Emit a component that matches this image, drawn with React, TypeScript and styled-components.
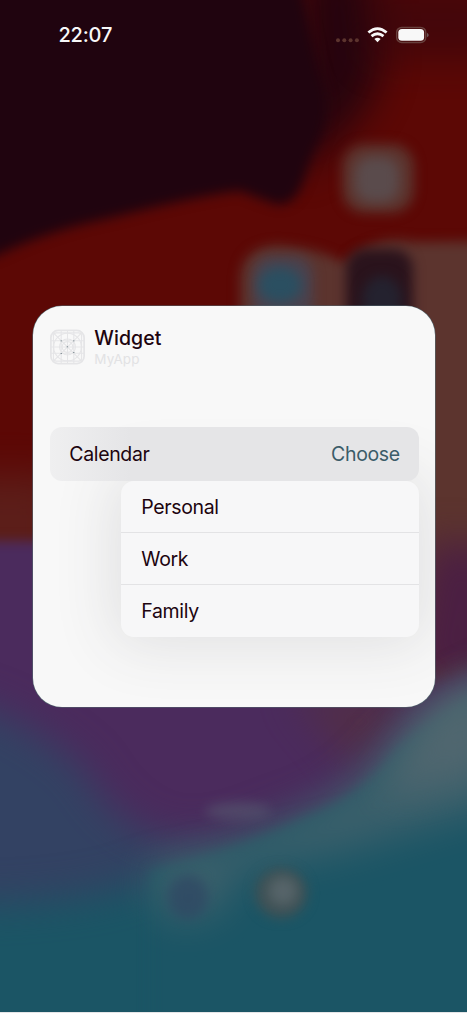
import React from "react";
import styled, { createGlobalStyle } from "styled-components";

const GlobalStyle = createGlobalStyle`
  *, *::before, *::after { box-sizing: border-box; }
  body { margin: 0; background: #1b5565; }
`;

const Screen = styled.main`
  position: relative;
  isolation: isolate;
  width: 467px;
  height: 1013px;
  overflow: hidden;
  display: flex;
  flex-direction: column;
  border-bottom: 1px solid #e5e5e7;
  color: #20040f;
  font-family: Inter, "Liberation Sans", sans-serif;
`;

const WallpaperArt = styled.svg`
  position: absolute;
  inset: 0;
  z-index: -1;
  width: 467px;
  height: 1013px;
`;

const StatusBar = styled.header`
  display: flex;
  align-items: center;
  justify-content: space-between;
  height: 70px;
  padding: 0 37px 0 58.5px;
  color: #f8f8f8;
`;

const Clock = styled.time`
  font-size: 20px;
  font-weight: 500;
  line-height: 24px;
  letter-spacing: -0.2px;
`;

const StatusIcons = styled.svg`
  display: block;
  width: 95px;
  height: 20px;
`;

const Card = styled.section`
  flex: none;
  width: 402px;
  height: 401px;
  margin: 236px 0 0 33.3px;
  padding: 23px 16.5px 0 17px;
  border-radius: 29px;
  background: #f8f8f8;
  box-shadow: 0 0 0 0.6px #546870;
  overflow: hidden;
`;

const CardHeader = styled.div`
  display: flex;
  align-items: flex-start;
  gap: 9px;
  height: 98px;
`;

const AppIcon = styled.svg`
  display: block;
  flex: none;
  width: 35px;
  height: 36px;
`;

const Heading = styled.div`
  display: flex;
  flex-direction: column;
`;

const Title = styled.h1`
  margin: -3px 0 0;
  font-size: 19.5px;
  font-weight: 500;
  line-height: 25px;
  letter-spacing: 0.1px;
`;

const AppName = styled.span`
  color: #e2e2e4;
  font-size: 13.5px;
  line-height: 17px;
  letter-spacing: 0.1px;
`;

const SettingRow = styled.div`
  position: relative;
  z-index: 1;
  display: flex;
  align-items: center;
  justify-content: space-between;
  height: 53.5px;
  padding: 0 19px;
  border-radius: 12px;
  background: linear-gradient(90deg, #efeff0, #e5e5e7 22%);
`;

const Label = styled.span<{ $muted?: boolean }>`
  color: ${({ $muted }) => ($muted ? "#3b5c69" : "inherit")};
  font-size: 19.5px;
  font-weight: 400;
  line-height: 24px;
  letter-spacing: -0.35px;
`;

const Menu = styled.ul`
  position: relative;
  margin: 0 0 0 71px;
  padding: 0;
  list-style: none;
  border-radius: 13px;
  background: #f7f7f8;
  box-shadow: 0 0 60px 8px rgba(60, 60, 75, 0.125);
`;

const MenuItem = styled.li`
  display: flex;
  align-items: center;
  height: 52px;
  padding: 1px 0 0 20px;
  border-bottom: 1px solid #e3e3e5;

  &:last-child {
    border-bottom-color: transparent;
  }
`;

function Wallpaper() {
  return (
    <WallpaperArt viewBox="0 0 467 1013" aria-hidden="true">
      <defs>
        <filter id="soft" x="-50%" y="-50%" width="200%" height="200%" colorInterpolationFilters="sRGB">
          <feGaussianBlur stdDeviation="6" />
        </filter>
        <filter id="wide" x="-50%" y="-50%" width="200%" height="200%" colorInterpolationFilters="sRGB">
          <feGaussianBlur stdDeviation="19" />
        </filter>
      </defs>
      <rect width="467" height="1013" fill="#5c0805" />
      <path d="M300 -40H365Q400 65 360 115Q325 150 300 180Z" fill="#20040f" opacity=".9" filter="url(#wide)" />
      <path
        d="M-40 -40H295L320 72Q335 110 318 144Q312 155 304 180Q294 208 275 204L240 191Q205 194 110 218Q50 230 0 254L-40 270Z"
        fill="#20040f"
        filter="url(#soft)"
      />
      <path d="M360 -20H500V60H370Z" fill="#31050e" opacity=".55" filter="url(#wide)" />
      <path
        d="M240 278Q242 247 277 245Q315 247 345 263Q375 233 415 242L500 241V700H400V410H240Z"
        fill="#5c342e"
        filter="url(#soft)"
      />
      <rect x="-40" y="475" width="100" height="110" fill="#5c342e" opacity=".5" filter="url(#wide)" />
      <rect x="342" y="144" width="72" height="69" rx="23" fill="#5c342e" filter="url(#soft)" />
      <rect x="355" y="157" width="44" height="45" rx="16" fill="#5a4b4c" filter="url(#soft)" />
      <rect x="253" y="256" width="60" height="65" rx="19" fill="#4a424e" filter="url(#soft)" />
      <ellipse cx="280" cy="285" rx="22" ry="18" fill="#2b4f61" filter="url(#soft)" />
      <rect x="346" y="249" width="67" height="82" rx="20" fill="#2a131c" filter="url(#soft)" />
      <ellipse cx="382" cy="300" rx="20" ry="24" fill="#24222f" filter="url(#soft)" />
      <path d="M-40 541H60L220 620L405 690L500 660V1050H-40Z" fill="#4b2b5d" filter="url(#soft)" />
      <path d="M430 540Q450 545 500 545V685H405Z" fill="#4b1f43" filter="url(#wide)" />
      <path d="M290 690H425L360 775Z" fill="#55303d" opacity=".65" filter="url(#wide)" />
      <path
        d="M-60 695Q20 710 85 770Q115 830 180 842Q235 840 280 818Q350 800 389 747Q430 703 525 664V1070H-60Z"
        fill="#334263"
        filter="url(#wide)"
      />
      <path d="M-60 905Q100 905 155 875L310 845L525 800V1070H-60Z" fill="#1b5565" filter="url(#wide)" />
      <path
        d="M150 871Q240 850 310 815Q363 795 396 750Q440 708 525 672V1070H150Z"
        fill="#1b5565"
        filter="url(#soft)"
      />
      <path
        d="M500 675Q420 697 385 745Q345 798 270 825Q235 842 155 855Q142 900 170 921Q235 923 235 872L340 853L500 805Z"
        fill="#546870"
        opacity=".55"
        filter="url(#wide)"
      />
      <path d="M425 710Q455 683 500 670V770L380 800Z" fill="#546870" opacity=".85" filter="url(#wide)" />
      <ellipse cx="238" cy="811" rx="33" ry="9" fill="#596073" opacity=".5" filter="url(#soft)" />
      <ellipse cx="188" cy="897" rx="20" ry="22" fill="#304964" opacity=".8" filter="url(#soft)" />
      <ellipse cx="281" cy="893" rx="26" ry="25" fill="#405256" filter="url(#soft)" />
      <ellipse cx="283" cy="891" rx="14" ry="14" fill="#566469" filter="url(#soft)" />
    </WallpaperArt>
  );
}

function Indicators() {
  return (
    <StatusIcons viewBox="335 25 95 20" role="img" aria-label="Wi-Fi connected, battery full">
      <g fill="#5c342e">
        <circle cx="338" cy="40.3" r="2" />
        <circle cx="344.3" cy="40.3" r="2" />
        <circle cx="350.6" cy="40.3" r="2" />
        <circle cx="356.9" cy="40.3" r="2" />
      </g>
      <g fill="none" stroke="#f8f8f8" strokeWidth="2.8">
        <path d="M368.4 32.5Q377.5 24.7 386.6 32.5" />
        <path d="M371.5 36.2Q377.5 31.2 383.5 36.2" />
      </g>
      <path d="M374.4 39Q377.5 36.6 380.6 39L377.5 42.2Z" fill="#f8f8f8" />
      <rect x="396.7" y="27.4" width="29" height="15" rx="5" fill="none" stroke="#68403d" strokeWidth="1.5" />
      <rect x="398.3" y="29" width="25.8" height="11.8" rx="3.6" fill="#f8f8f8" />
      <path d="M427.2 32.7Q430 35 427.2 37.2Z" fill="#74686b" />
    </StatusIcons>
  );
}

function PlaceholderIcon() {
  return (
    <AppIcon viewBox="0 0 36 37" aria-hidden="true">
      <g fill="none" stroke="#e5e5e7" strokeWidth="1.1">
        <rect x=".9" y="1.4" width="34.2" height="34.2" rx="7.5" strokeWidth="1.8" />
        <rect x="3.5" y="4" width="29" height="29" rx="3" />
        <path d="M11.5 1V36M18 1V36M24.5 1V36M1 12H35M1 18.5H35M1 25H35M3 3.5L33 33.5M33 3.5L3 33.5" />
        <circle cx="18" cy="18.5" r="14.2" />
        <circle cx="18" cy="18.5" r="8.2" />
        <circle cx="18" cy="18.5" r="5.5" />
      </g>
      <g fill="#546870">
        <rect x="11" y="11.7" width="1" height="1" />
        <rect x="24" y="11.7" width="1" height="1" />
        <rect x="17.3" y="17.8" width="1" height="1" />
        <rect x="11" y="24.7" width="1" height="1" />
        <rect x="24" y="23.7" width="1" height="1" />
      </g>
    </AppIcon>
  );
}

const calendars = ["Personal", "Work", "Family"];

export default function App() {
  return (
    <>
      <GlobalStyle />
      <Screen>
        <Wallpaper />
        <StatusBar>
          <Clock>22:07</Clock>
          <Indicators />
        </StatusBar>
        <Card>
          <CardHeader>
            <PlaceholderIcon />
            <Heading>
              <Title>Widget</Title>
              <AppName>MyApp</AppName>
            </Heading>
          </CardHeader>
          <SettingRow>
            <Label>Calendar</Label>
            <Label $muted>Choose</Label>
          </SettingRow>
          <Menu>
            {calendars.map((name) => (
              <MenuItem key={name}>
                <Label>{name}</Label>
              </MenuItem>
            ))}
          </Menu>
        </Card>
      </Screen>
    </>
  );
}
